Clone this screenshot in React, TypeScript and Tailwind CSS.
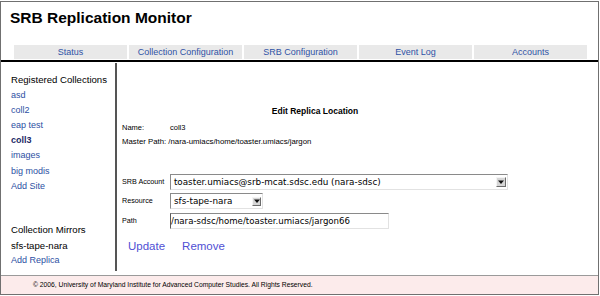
import React from "react";

const tabs = ["Status", "Collection Configuration", "SRB Configuration", "Event Log", "Accounts"];
const collections = ["asd", "coll2", "eap test"];
const collections2 = ["images", "big modis"];

function Arrow({ size }: { size: number }) {
  return (
    <div
      className="flex items-center justify-center bg-[#d6d6d6] border border-t-[#f4f4f4] border-l-[#f4f4f4] border-r-[#6c6c6c] border-b-[#6c6c6c]"
      style={{ width: size, height: size }}
    >
      <svg width="6" height="5" viewBox="0 0 6 5">
        <path d="M0 0.5 L6 0.5 L3 4 Z" fill="#111" />
      </svg>
    </div>
  );
}

export default function App() {
  return (
    <div className="w-[600px] h-[296px] bg-white font-['Liberation_Sans',Arial,sans-serif] text-black overflow-hidden">
      <div className="mt-[1px] w-[599px] h-[294px] border border-[#707070] flex flex-col">
        <div className="h-[43px] pl-[9px] pt-[7px] text-[15.5px] leading-[18px] font-bold">
          SRB Replication Monitor
        </div>
        <div className="h-[14px] flex gap-[2px] pl-[13px]">
          {tabs.map((t) => (
            <div
              key={t}
              className="w-[113px] bg-[#e9e9e9] text-[9px] leading-[14px] text-center text-[#2f52a5]"
            >
              {t}
            </div>
          ))}
        </div>
        <div className="h-[1px]" />
        <div className="h-[2px] bg-black" />
        <div className="h-[213px] flex">
          <div className="w-[116px] flex">
            <div className="flex-1 pl-[10px] pt-[10.4px] leading-[15.2px]">
              <div className="text-[9.6px]">Registered Collections</div>
              {collections.map((c) => (
                <div key={c} className="text-[9px] text-[#2c4fa3]">{c}</div>
              ))}
              <div className="text-[9px] font-bold text-[#1c2a66]">coll3</div>
              {collections2.map((c) => (
                <div key={c} className="text-[9px] text-[#2c4fa3]">{c}</div>
              ))}
              <div className="text-[9px] text-[#2c4fa3]">Add Site</div>
              <div className="mt-[28.4px] text-[9.6px]">Collection Mirrors</div>
              <div className="text-[9.6px]">sfs-tape-nara</div>
              <div className="text-[9px] text-[#2c4fa3]">Add Replica</div>
            </div>
            <div className="w-[2px] bg-[#555] mt-[1px] mb-[4px]" />
          </div>
          <div className="flex-1 pl-[5px]">
            <div className="w-[386px]">
              <div className="mt-[43px] h-[12px] leading-[12px] text-[8.5px] font-bold text-center">
                Edit Replica Location
              </div>
              <div className="mt-[5px] h-[12px] leading-[12px] flex text-[7.5px]">
                <div className="w-[48px]">Name:</div>
                <div>coll3</div>
              </div>
              <div className="mt-[2px] h-[12px] leading-[12px] text-[7.8px]">
                Master Path: /nara-umiacs/home/toaster.umiacs/jargon
              </div>
              <div className="mt-[26px] flex items-center h-[16px]">
                <div className="w-[48px] text-[7.2px]">SRB Account</div>
                <div className="w-[339px] h-[16px] flex items-center justify-between bg-white border border-t-[#8a8a8a] border-l-[#8a8a8a] border-r-[#e2e2e2] border-b-[#e2e2e2] pl-[3px] pr-[1px]">
                  <span className="font-['DejaVu_Sans',sans-serif] text-[8.8px] leading-[14px]">
                    toaster.umiacs@srb-mcat.sdsc.edu (nara-sdsc)
                  </span>
                  <Arrow size={10} />
                </div>
              </div>
              <div className="mt-[3px] flex items-center h-[16px]">
                <div className="w-[48px] text-[7.2px]">Resource</div>
                <div className="w-[93px] h-[16px] flex items-center justify-between bg-white border border-t-[#8a8a8a] border-l-[#8a8a8a] border-r-[#e2e2e2] border-b-[#e2e2e2] pl-[3px] pr-[1px]">
                  <span className="font-['DejaVu_Sans',sans-serif] text-[8.8px] leading-[14px]">
                    sfs-tape-nara
                  </span>
                  <Arrow size={9} />
                </div>
              </div>
              <div className="mt-[4px] flex items-center h-[16px]">
                <div className="w-[48px] text-[7.2px]">Path</div>
                <div className="w-[219px] h-[16px] flex items-center bg-white border border-t-[#8a8a8a] border-l-[#5a5a5a] border-r-[#e2e2e2] border-b-[#e2e2e2]">
                  <span className="font-['DejaVu_Sans',sans-serif] text-[8.6px] leading-[14px]">
                    /nara-sdsc/home/toaster.umiacs/jargon66
                  </span>
                </div>
              </div>
              <div className="mt-[10px] h-[14px] leading-[14px] flex gap-[17px] pl-[6px] text-[11.5px] text-[#4f4fd4]">
                <span>Update</span>
                <span>Remove</span>
              </div>
            </div>
          </div>
        </div>
        <div className="h-[19px] border-t border-[#9a9a9a] bg-[#fcebeb] pl-[32px] text-[6.75px] leading-[18px]">
          © 2006, University of Maryland Institute for Advanced Computer Studies. All Rights Reserved.
        </div>
      </div>
    </div>
  );
}
